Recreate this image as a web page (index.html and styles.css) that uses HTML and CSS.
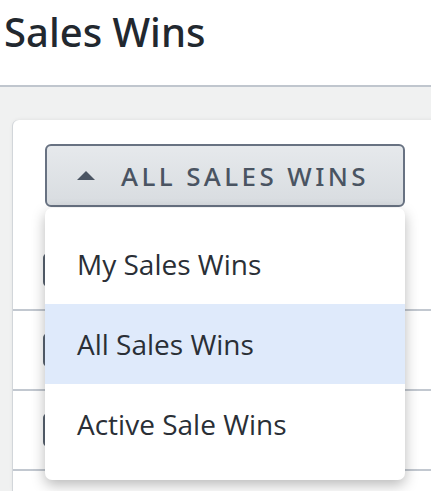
FILE: index.html
```html
<!DOCTYPE html>
<html lang="en">
<head>
<meta charset="utf-8">
<title>Sales Wins</title>
<link rel="stylesheet" href="styles.css">
</head>
<body>
  <header class="header">
    <h1 class="title">Sales Wins</h1>
  </header>
  <main class="main">
    <section class="card">
      <div class="dropdown">
        <button class="toggle" type="button">
          <svg class="caret" width="18" height="9" viewBox="0 0 18 9"><path d="M0 9 L9 0 L18 9 Z" fill="#4a5462"/></svg>
          <span class="toggle-label">All Sales Wins</span>
        </button>
        <ul class="menu">
          <li class="menu-item">My Sales Wins</li>
          <li class="menu-item active">All Sales Wins</li>
          <li class="menu-item">Active Sale Wins</li>
        </ul>
      </div>
      <div class="rows">
        <div class="row"><span class="check"></span></div>
        <div class="row"><span class="check"></span></div>
        <div class="row"><span class="check"></span></div>
        <div class="row"><span class="check"></span></div>
      </div>
    </section>
  </main>
</body>
</html>
```
FILE: styles.css
```css
html, body {
  margin: 0;
  padding: 0;
  height: 100%;
  overflow: hidden;
}
body {
  font-family: "Open Sans", "Noto Sans", sans-serif;
  background: #f0f1f1;
  color: #23292f;
}
.header {
  background: #ffffff;
  padding: 5px 4px 26px 4px;
  border-bottom: 2px solid #c0c6ce;
}
.title {
  margin: 0;
  font-family: "Noto Sans", "Open Sans", sans-serif;
  font-size: 40px;
  line-height: 54px;
  font-weight: 500;
  color: #22282f;
}
.main {
  padding: 33px 0 0 13px;
  overflow: hidden;
}
.card {
  background: #ffffff;
  border-radius: 6px 0 0 0;
  box-shadow: -1px 0 0 #d2d6da, 0 0 4px rgba(0,0,0,0.08);
  padding: 24px 0 0 32px;
  margin-right: -20px;
  height: 347px;
  overflow: hidden;
}
.dropdown {
  position: relative;
  width: 360px;
}
.toggle {
  box-sizing: border-box;
  width: 360px;
  height: 63px;
  border: 2px solid #687282;
  border-radius: 6px;
  background: linear-gradient(#e6e9ec, #d8dce0);
  display: flex;
  align-items: center;
  padding: 0 0 0 30px;
  margin: 0;
  font-family: "Open Sans", "Noto Sans", sans-serif;
  cursor: pointer;
}
.caret {
  display: block;
  flex: none;
}
.toggle-label {
  margin-left: 26px;
  font-family: "Noto Sans", "Open Sans", sans-serif;
  font-size: 26px;
  font-weight: 500;
  letter-spacing: 3.4px;
  text-transform: uppercase;
  color: #4a5462;
}
.menu {
  position: absolute;
  left: 0;
  top: 64px;
  z-index: 2;
  box-sizing: border-box;
  width: 360px;
  margin: 0;
  padding: 16px 0;
  list-style: none;
  background: #ffffff;
  border-radius: 7px;
  box-shadow: 0 5px 14px rgba(0,0,0,0.28);
}
.menu-item {
  height: 80px;
  display: flex;
  align-items: center;
  padding-left: 32px;
  font-size: 28px;
  color: #2a2f36;
}
.menu-item.active {
  background: #dfeafb;
}
.rows {
  margin: 24px 0 0 -32px;
}
.row {
  box-sizing: border-box;
  height: 80px;
  border-bottom: 2px solid #c2c8d0;
  display: flex;
  align-items: center;
  padding-left: 30px;
}
.check {
  box-sizing: border-box;
  width: 34px;
  height: 34px;
  border: 3px solid #5a6572;
  border-radius: 5px;
}
```
